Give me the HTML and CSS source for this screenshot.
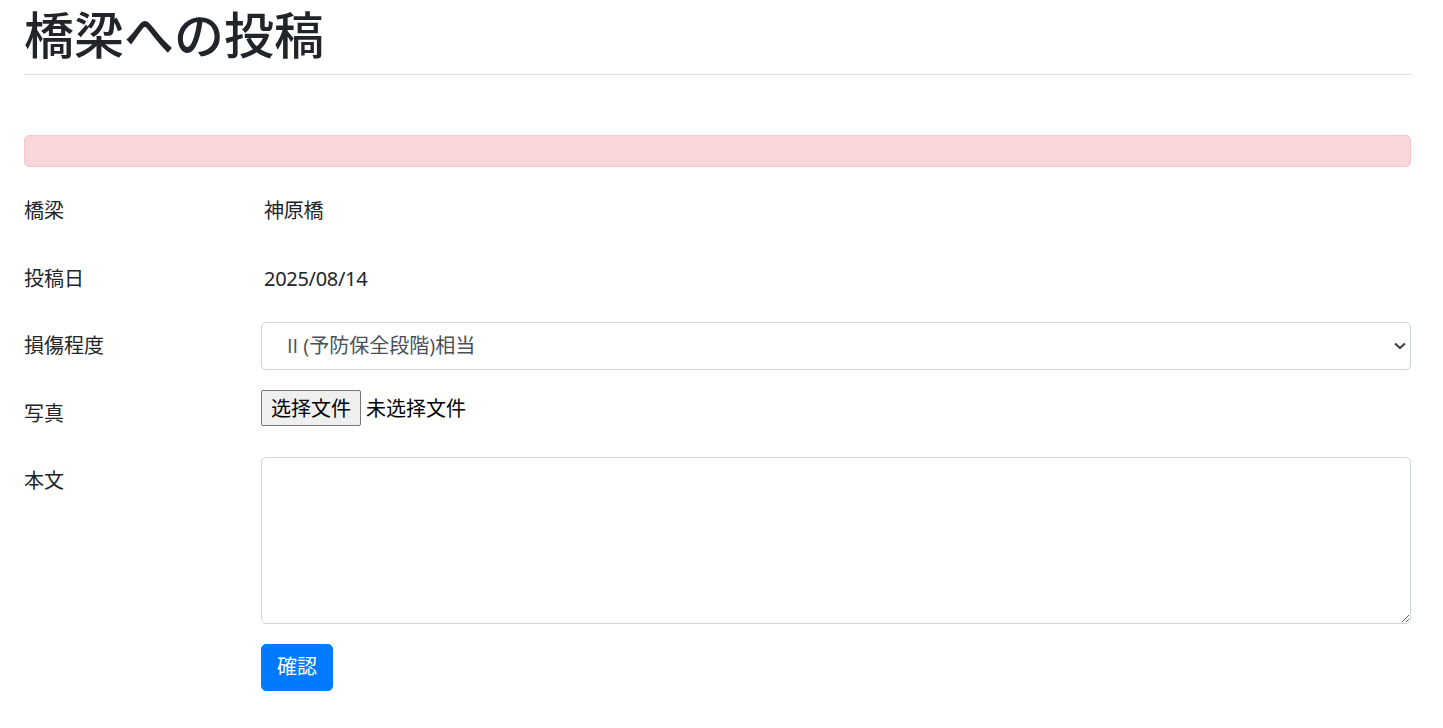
FILE: index.html
```html
<!DOCTYPE html>
<html lang="ja">

<head>
    <meta charset="UTF-8">
    <meta name="viewport" content="width=device-width, initial-scale=1.0">
    <title>橋梁への投稿</title>
    <link rel="stylesheet" href="styles.css">
</head>

<body>
    <div class="container">
        <h1 class="title">橋梁への投稿</h1>
        <hr class="divider">

        <div class="alert"></div>

        <form class="post-form">
            <div class="form-row">
                <label class="form-label">橋梁</label>
                <div class="form-value">
                    <div class="plaintext">神原橋</div>
                </div>
            </div>
            <div class="form-row">
                <label class="form-label">投稿日</label>
                <div class="form-value">
                    <div class="plaintext">2025/08/14</div>
                </div>
            </div>
            <div class="form-row">
                <label class="form-label" for="damage">損傷程度</label>
                <div class="form-value">
                    <div class="select-wrap">
                        <select id="damage" class="form-control select">
                            <option>II (予防保全段階)相当</option>
                            <option>I (健全)</option>
                            <option>III (早期措置段階)相当</option>
                            <option>IV (緊急措置段階)相当</option>
                        </select>
                        <svg class="select-arrow" viewBox="0 0 12 8" width="12" height="8">
                            <path d="M1 1.5L6 6L11 1.5" fill="none" stroke="#444" stroke-width="2.2"></path>
                        </svg>
                    </div>
                </div>
            </div>
            <div class="form-row">
                <label class="form-label">写真</label>
                <div class="form-value">
                    <div class="file-field">
                        <label class="file-btn">选择文件<input type="file" class="file-input"></label>
                        <span class="file-name">未选择文件</span>
                    </div>
                </div>
            </div>
            <div class="form-row">
                <label class="form-label" for="body">本文</label>
                <div class="form-value">
                    <textarea id="body" class="form-control textarea" rows="5"></textarea>
                </div>
            </div>
            <div class="form-row">
                <div class="form-label"></div>
                <div class="form-value">
                    <button type="submit" class="btn-primary">確認</button>
                </div>
            </div>
        </form>
    </div>
</body>

</html>
```

FILE: styles.css
```css
/* Reset styles */
* {
    margin: 0;
    padding: 0;
    box-sizing: border-box;
}

body {
    font-family: "Noto Sans", "Noto Sans CJK JP", sans-serif;
    font-size: 20px;
    line-height: 1.5;
    color: #212529;
    background: #fff;
}

.container {
    padding: 0 32px 0 24px;
}

.title {
    margin-top: 5px;
    margin-bottom: 9px;
    font-size: 50px;
    font-weight: 500;
    line-height: 60px;
}

.divider {
    border: 0;
    border-top: 1px solid #e0e0e0;
}

.alert {
    margin-top: 60px;
    margin-bottom: 20px;
    height: 32px;
    background: #f8d7da;
    border: 1px solid #f5c6cb;
    border-radius: 5px;
}

.form-row {
    display: flex;
    margin-bottom: 20px;
}

.form-label {
    flex: 0 0 237px;
    padding: 9px 0 8.5px;
    line-height: 30px;
}

.form-value {
    flex: 1;
    min-width: 0;
}

.plaintext {
    padding: 9px 3px 8.5px;
    line-height: 30px;
    letter-spacing: -0.3px;
}

.form-control {
    display: block;
    width: 100%;
    font-family: "Open Sans", "Noto Sans CJK JP", sans-serif;
    font-size: 20px;
    color: #495057;
    background: #fff;
    border: 1px solid #ced4da;
    border-radius: 5px;
}

.select-wrap {
    position: relative;
}

.select {
    height: 47.5px;
    padding: 7.5px 40px 7.5px 25px;
    line-height: 30px;
    appearance: none;
    -webkit-appearance: none;
}

.select-arrow {
    position: absolute;
    right: 5px;
    top: 20px;
    pointer-events: none;
}

.textarea {
    height: 166.5px;
    padding: 7.5px 15px;
    line-height: 30px;
    resize: vertical;
}

.file-field {
    display: flex;
    align-items: flex-start;
    height: 47px;
    padding-top: 0.5px;
    font-family: "Noto Sans CJK SC", sans-serif;
    color: #000;
}

.file-btn {
    display: inline-block;
    height: 36px;
    padding: 0 9px;
    line-height: 34px;
    background: #efefef;
    border: 1px solid #767676;
    border-radius: 2px;
    cursor: pointer;
}

.file-input {
    display: none;
}

.file-name {
    margin-left: 5px;
    line-height: 36px;
}

.btn-primary {
    padding: 7.5px 15px;
    font: inherit;
    line-height: 30px;
    color: #fff;
    background: #007bff;
    border: 1px solid #007bff;
    border-radius: 5px;
    cursor: pointer;
}

.btn-primary:hover {
    background: #0069d9;
}
```
